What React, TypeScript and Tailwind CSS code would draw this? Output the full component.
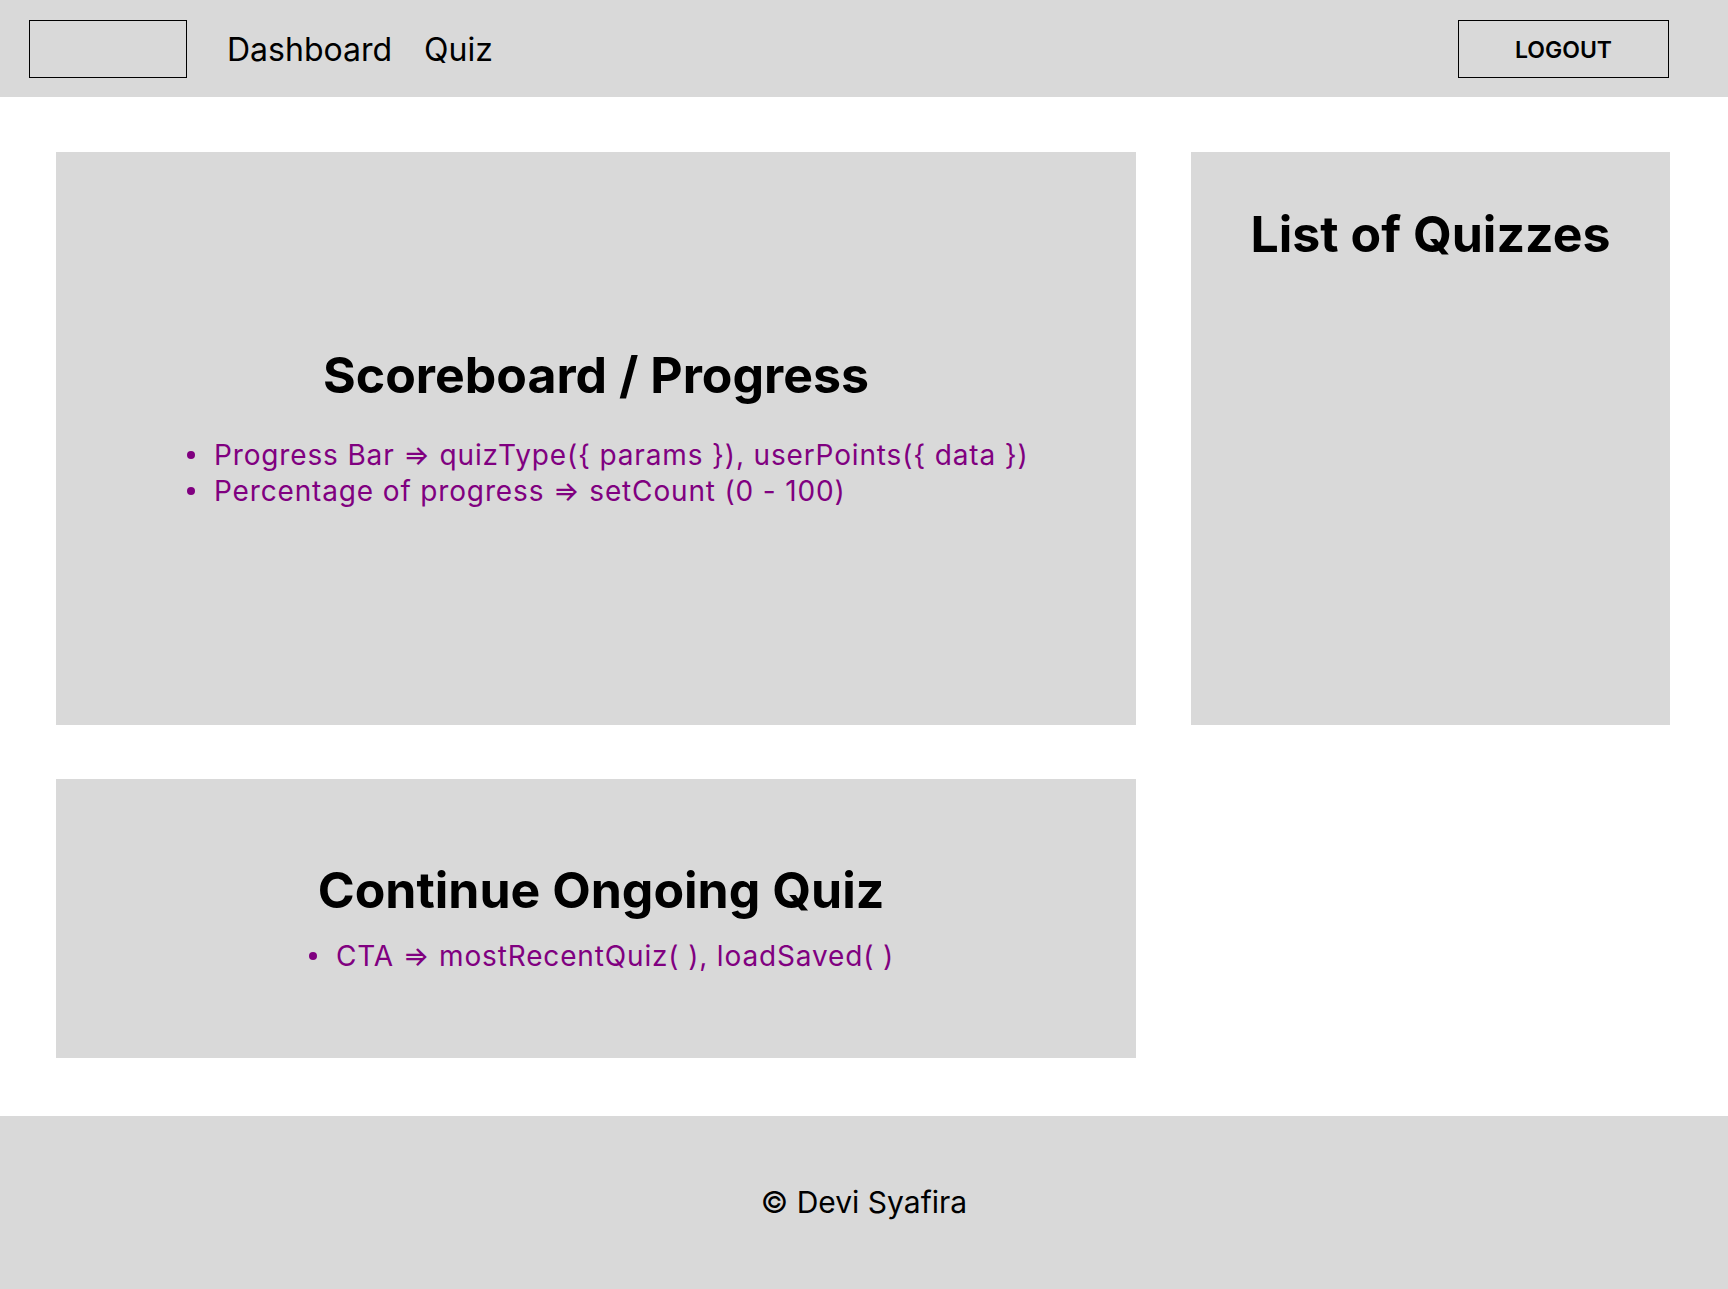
const PURPLE = "text-[#800080]";

function Bullet({ children }: { children: React.ReactNode }) {
  return (
    <li className="flex items-center gap-[19px]">
      <span className="h-[8px] w-[8px] shrink-0 rounded-full bg-[#800080]" />
      <span>{children}</span>
    </li>
  );
}

export default function App() {
  return (
    <div
      className="flex min-h-[1289px] flex-col bg-white text-black"
      style={{ fontFamily: "Inter, 'Noto Sans', sans-serif" }}
    >
      <header className="flex h-[97px] items-center bg-[#d9d9d9] pl-[29px] pr-[59px]">
        <div className="h-[58px] w-[158px] border border-black" />
        <nav className="ml-[40px] flex gap-[32px] pt-[3px] text-[32px] leading-none">
          <a>Dashboard</a>
          <a>Quiz</a>
        </nav>
        <button
          type="button"
          className="ml-auto flex h-[58px] w-[211px] items-center justify-center border border-black pt-[3px] text-[23px] font-semibold"
        >
          LOGOUT
        </button>
      </header>

      <main className="grid grid-cols-[1080px_1fr] grid-rows-[573px_279px] gap-x-[55px] gap-y-[54px] pb-[58px] pl-[56px] pr-[58px] pt-[55px]">
        <section className="flex flex-col bg-[#d9d9d9] pt-[193px]">
          <h2 className="text-center text-[50px] font-bold leading-[60px]">Scoreboard / Progress</h2>
          <ul className={`ml-[131px] mt-[32px] text-[28px] leading-[36px] tracking-[0.85px] ${PURPLE}`}>
            <Bullet>Progress Bar ⇒ quizType({"{"} params {"}"}), userPoints({"{"} data {"}"})</Bullet>
            <Bullet>Percentage of progress ⇒ setCount (0 - 100)</Bullet>
          </ul>
        </section>

        <section className="flex flex-col bg-[#d9d9d9] pt-[52px]">
          <h2 className="text-center text-[50px] font-bold leading-[60px]">List of Quizzes</h2>
        </section>

        <section className="flex flex-col bg-[#d9d9d9] pt-[81px]">
          <h2 className="pl-[10px] text-center text-[50px] font-bold leading-[60px]">Continue Ongoing Quiz</h2>
          <ul className={`ml-[253px] mt-[18px] text-[28px] leading-[36px] tracking-[0.85px] ${PURPLE}`}>
            <Bullet>CTA ⇒ mostRecentQuiz( ), loadSaved( )</Bullet>
          </ul>
        </section>
      </main>

      <footer className="flex h-[173px] items-center justify-center bg-[#d9d9d9] text-[30px]">
        © Devi Syafira
      </footer>
    </div>
  );
}
